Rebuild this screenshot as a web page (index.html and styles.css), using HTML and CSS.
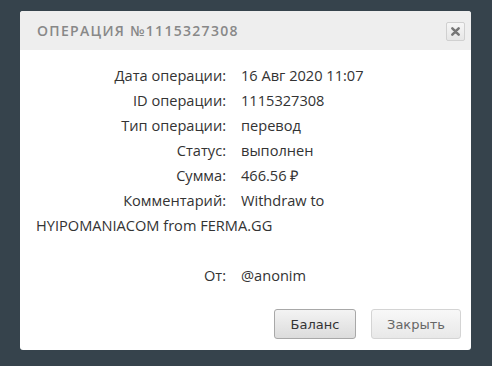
FILE: index.html
```html
<!DOCTYPE html>
<html lang="ru">
<head>
<meta charset="utf-8">
<title>Операция</title>
<link rel="stylesheet" href="styles.css">
</head>
<body>
<div class="dialog">
  <div class="header">
    <span class="title">Операция №1115327308</span>
    <button class="close" aria-label="close">
      <svg width="9" height="9" viewBox="0 0 10 10"><path d="M1.5 1.5 L8.5 8.5 M8.5 1.5 L1.5 8.5" stroke="#777" stroke-width="2.8" stroke-linecap="round"/></svg>
    </button>
  </div>
  <div class="content">
    <div class="row"><span class="label">Дата операции:</span>16 Авг 2020 11:07</div>
    <div class="row"><span class="label">ID операции:</span>1115327308</div>
    <div class="row"><span class="label">Тип операции:</span>перевод</div>
    <div class="row"><span class="label">Статус:</span>выполнен</div>
    <div class="row"><span class="label">Сумма:</span>466.56 ₽</div>
    <div class="row"><span class="label">Комментарий:</span>Withdraw to HYIPOMANIACOM from FERMA.GG</div>
    <div class="row empty"></div>
    <div class="row"><span class="label">От:</span>@anonim</div>
  </div>
  <div class="footer">
    <button class="btn primary">Баланс</button>
    <button class="btn">Закрыть</button>
  </div>
</div>
</body>
</html>
```
FILE: styles.css
```css
html, body {
  margin: 0;
  padding: 0;
}
body {
  background: #36434c;
  width: 492px;
  height: 366px;
  overflow: hidden;
  font-family: "Open Sans", "Liberation Sans", sans-serif;
}
.dialog {
  margin: 11px 0 0 20px;
  width: 451px;
  height: 339px;
  background: #fff;
  border-radius: 3px;
  display: flex;
  flex-direction: column;
  overflow: hidden;
}
.header {
  height: 39px;
  background: #eeeeee;
  display: flex;
  align-items: center;
  justify-content: space-between;
  padding: 0 6px 0 17px;
}
.title {
  text-transform: uppercase;
  color: #888;
  font-size: 14px;
  font-weight: 600;
  letter-spacing: 1.3px;
}
.close {
  width: 19px;
  height: 19px;
  padding: 0;
  margin-top: 1px;
  border: 1px solid #d0d0d0;
  border-radius: 2px;
  background: linear-gradient(#f6f6f6, #e6e6e6);
  display: flex;
  align-items: center;
  justify-content: center;
}
.content {
  padding: 13px 20px 0 16px;
  color: #333;
  font-size: 14.6px;
  line-height: 25px;
  flex: 1;
}
.row.empty {
  height: 25px;
}
.label {
  display: inline-block;
  width: 190px;
  margin-right: 15px;
  text-align: right;
}
.footer {
  display: flex;
  justify-content: flex-end;
  gap: 15px;
  padding: 0 10px 11px 0;
}
.btn {
  height: 30px;
  width: 90px;
  font-family: "DejaVu Sans", Verdana, sans-serif;
  font-size: 13px;
  color: #666;
  border: 1px solid #d4d4d4;
  border-radius: 3px;
  background: linear-gradient(#f8f8f8, #e8e8e8);
  padding: 0;
}
.btn.primary {
  width: 82px;
  color: #333;
  border-color: #a8a8a8;
  background: linear-gradient(#f3f3f3, #dcdcdc);
}
```
